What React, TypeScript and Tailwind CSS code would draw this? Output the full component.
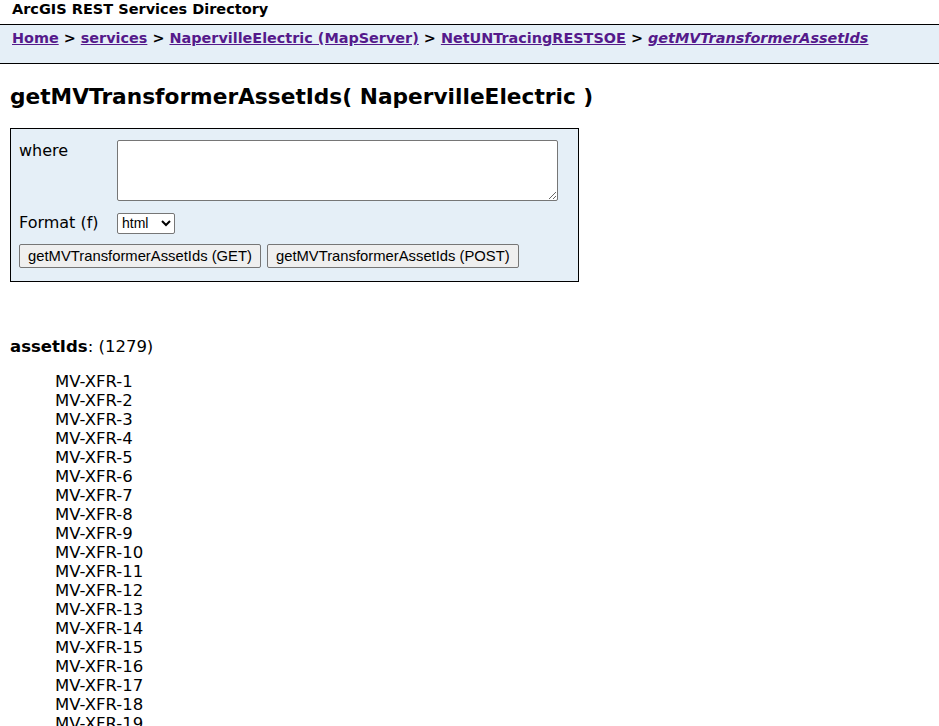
const ids = Array.from({ length: 19 }, (_, i) => `MV-XFR-${i + 1}`);

const crumbs = [
  { label: "Home" },
  { label: "services" },
  { label: "NapervilleElectric (MapServer)" },
  { label: "NetUNTracingRESTSOE" },
];

export default function App() {
  return (
    <div className="h-[726px] overflow-hidden bg-white text-black font-['DejaVu_Sans',Verdana,sans-serif]">
      <div className="px-[12px] h-[24px] text-[14.5px] font-bold leading-[18px]">
        ArcGIS REST Services Directory
      </div>
      <div className="border-y border-black bg-[#e5eff7] h-[40px] px-[12px] pt-[4px] text-[14.4px] font-bold leading-[19px]">
        {crumbs.map((c) => (
          <span key={c.label}>
            <a href="#" className="underline text-[#551a8b]">
              {c.label}
            </a>{" "}
            &gt;{" "}
          </span>
        ))}
        <a href="#" className="underline italic text-[#551a8b]">
          getMVTransformerAssetIds
        </a>
      </div>

      <div className="px-[10px]">
        <h2 className="mt-[20px] text-[21.7px] leading-[26px] font-bold">
          getMVTransformerAssetIds( NapervilleElectric )
        </h2>

        <form className="mt-[18px] w-[569px] h-[154px] border border-black bg-[#e5eff7] px-[8px] pt-[11px] text-[16px]">
          <div className="flex">
            <label className="w-[98px] leading-[22px]">where</label>
            <textarea className="w-[441px] h-[61px] bg-white border border-[#767676] rounded-[2px]" />
          </div>
          <div className="flex items-center mt-[10px]">
            <label className="w-[98px]">Format (f)</label>
            <select className="h-[21px] w-[58px] bg-white border border-[#767676] rounded-[2px] text-[14px] font-['Liberation_Sans',Arial,sans-serif] appearance-auto">
              <option>html</option>
            </select>
          </div>
          <div className="flex gap-[6px] mt-[9px] text-[14.8px] font-['Liberation_Sans',Arial,sans-serif]">
            <button type="button" className="h-[24px] px-[8px] bg-[#efefef] border border-[#767676] rounded-[2px]">
              getMVTransformerAssetIds (GET)
            </button>
            <button type="button" className="h-[24px] px-[8px] bg-[#efefef] border border-[#767676] rounded-[2px]">
              getMVTransformerAssetIds (POST)
            </button>
          </div>
        </form>

        <p className="mt-[55px] text-[16.5px] leading-[19px]">
          <b>assetIds</b>: (1279)
        </p>
        <ul className="mt-[16px] pl-[45px] text-[16.5px] leading-[19px]">
          {ids.map((id) => (
            <li key={id}>{id}</li>
          ))}
        </ul>
      </div>
    </div>
  );
}
